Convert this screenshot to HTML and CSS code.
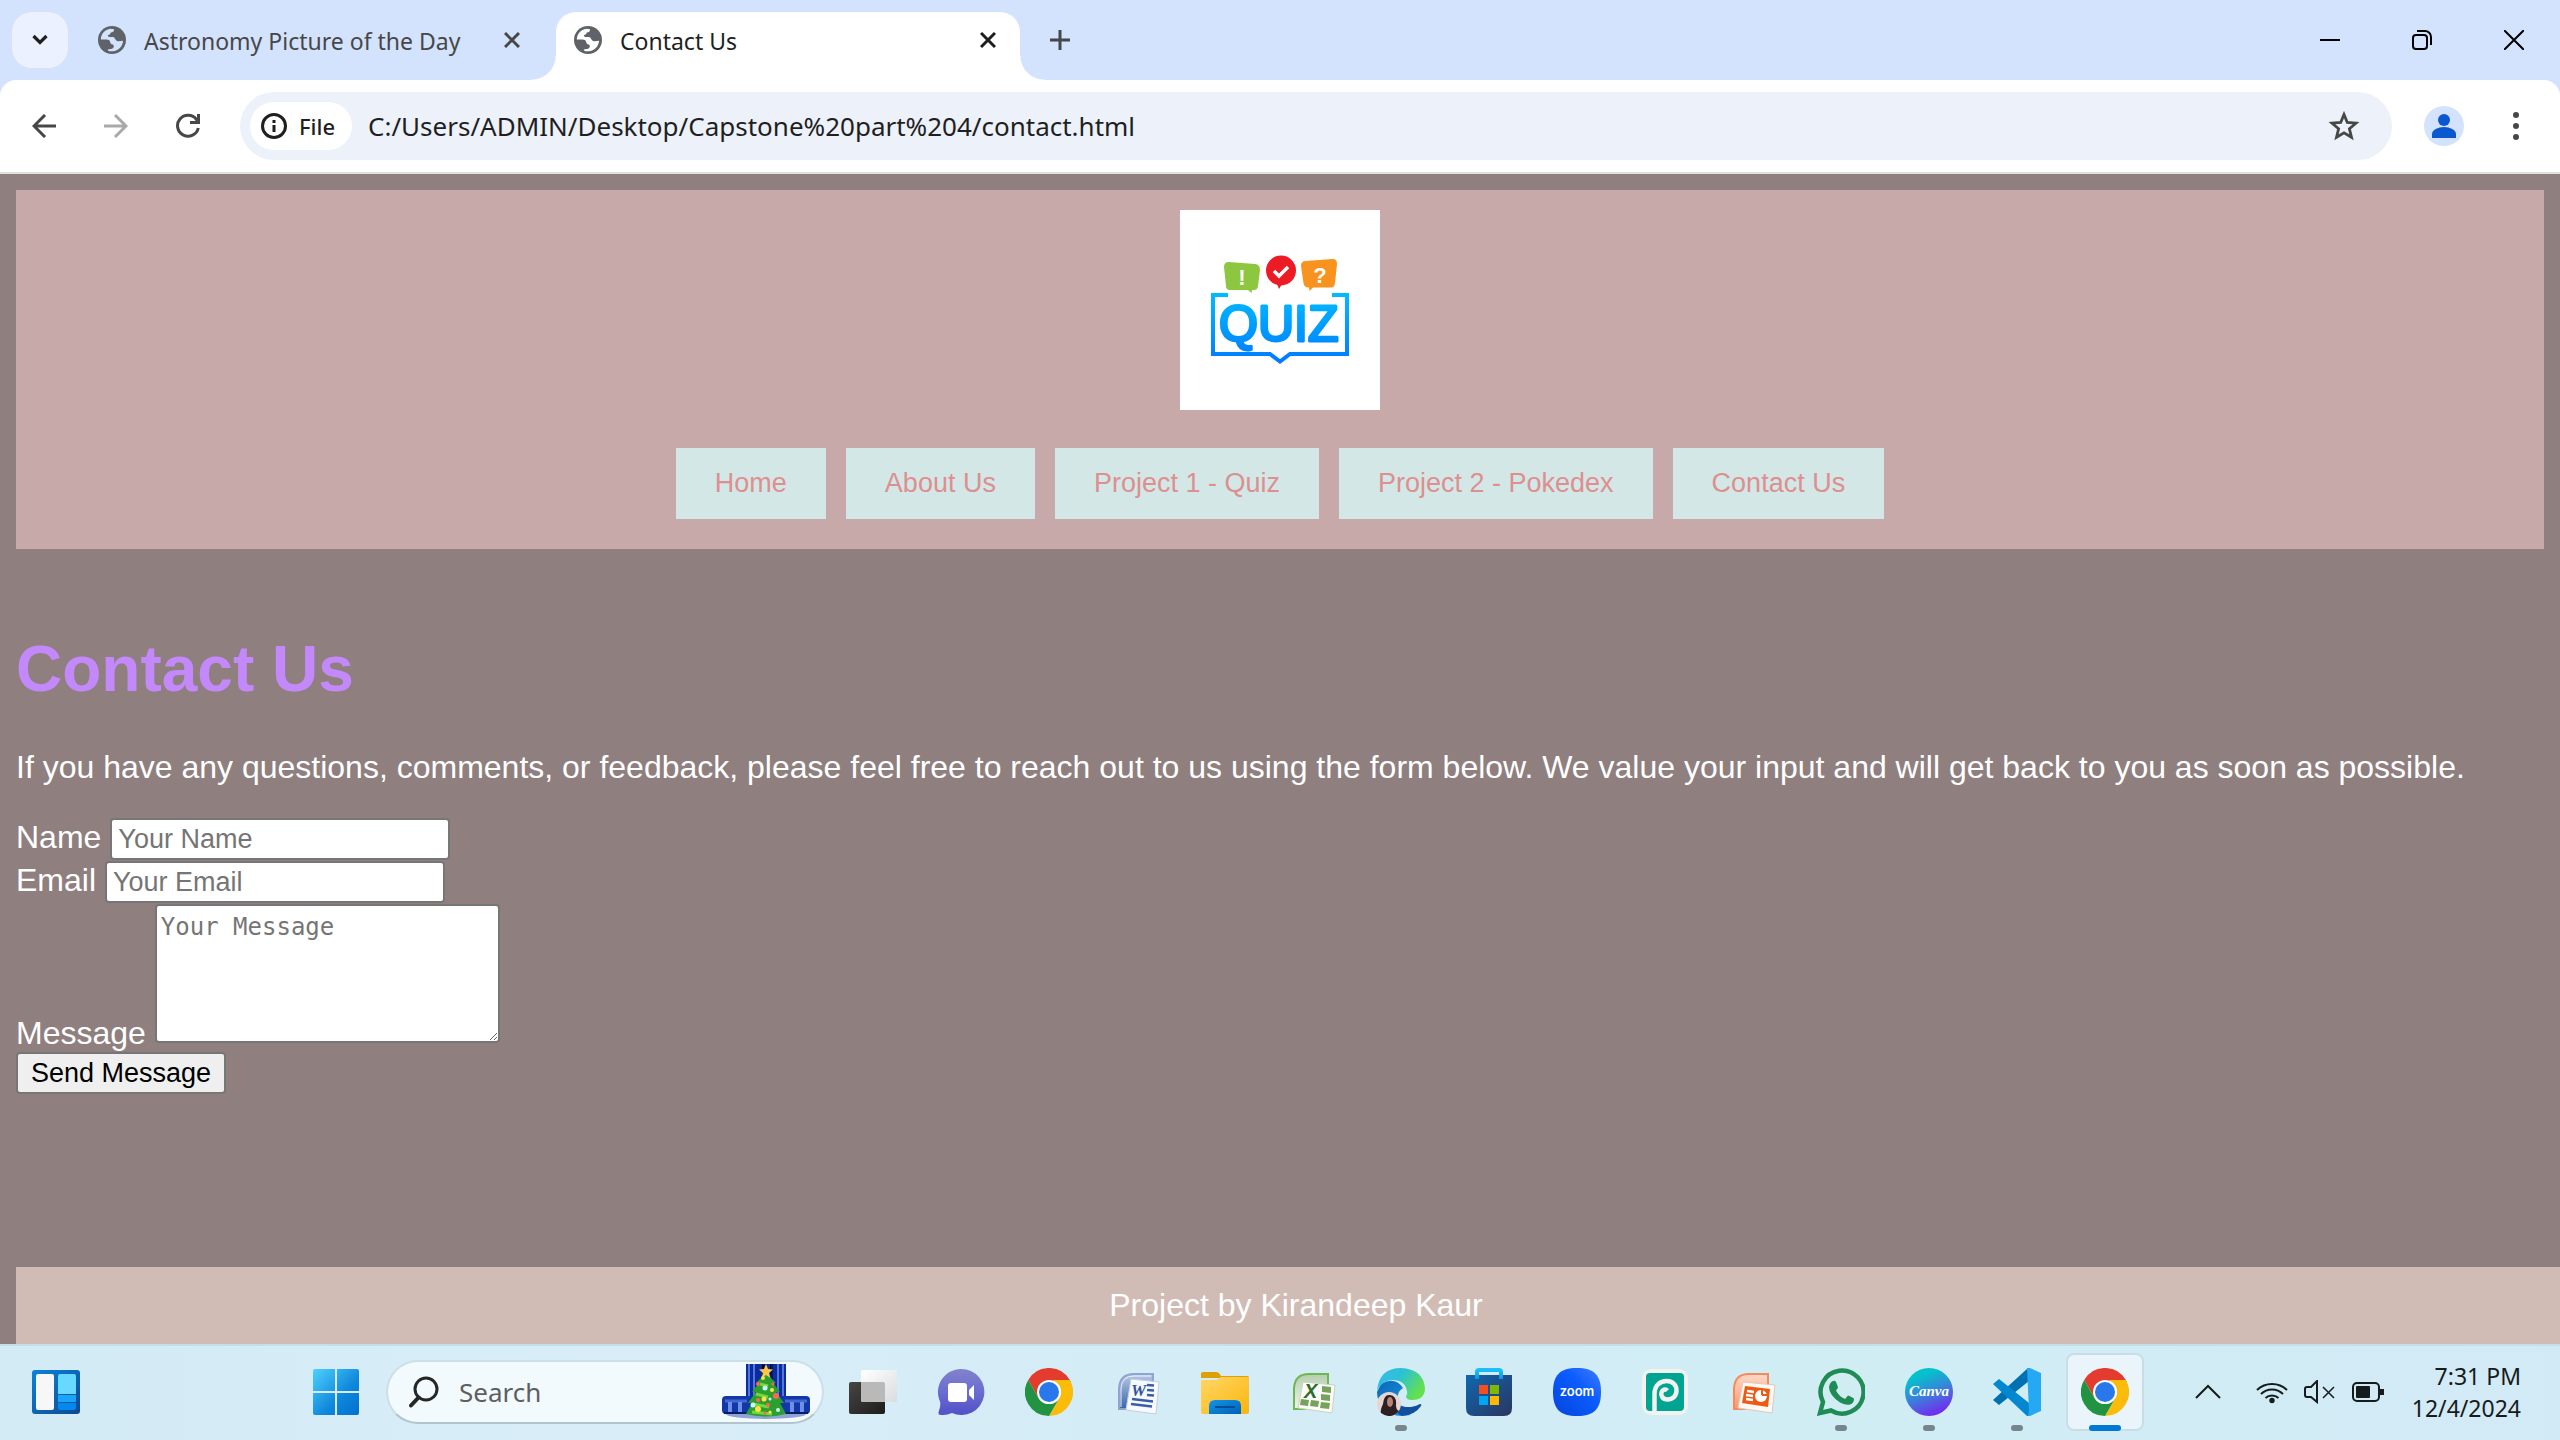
FILE: index.html
```html
<!DOCTYPE html>
<html lang="en">
<head>
<meta charset="utf-8">
<title>Contact Us</title>
<link rel="stylesheet" href="styles.css">
</head>
<body>
<svg class="defs" width="0" height="0" aria-hidden="true">
  <defs>
    <linearGradient id="quizBlue" gradientUnits="userSpaceOnUse" x1="0" y1="83" x2="0" y2="154"><stop offset="0" stop-color="#00bcff"/><stop offset="1" stop-color="#0079ff"/></linearGradient>
    <linearGradient id="winBlue" gradientUnits="userSpaceOnUse" x1="0" y1="0" x2="46" y2="46"><stop offset="0" stop-color="#4fd2ff"/><stop offset=".6" stop-color="#0f87db"/><stop offset="1" stop-color="#0070d0"/></linearGradient>
    <linearGradient id="widgetBlue" x1="0" y1="0" x2="1" y2="1"><stop offset="0" stop-color="#0a84dc"/><stop offset="1" stop-color="#10478f"/></linearGradient>
    <linearGradient id="darkPane" x1="0" y1="0" x2="1" y2="1"><stop offset="0" stop-color="#484644"/><stop offset="1" stop-color="#1d1c1b"/></linearGradient>
    <linearGradient id="lightPane" x1="0" y1="0" x2="1" y2="1"><stop offset="0" stop-color="#fff"/><stop offset="1" stop-color="#d9dcde"/></linearGradient>
    <linearGradient id="chatFill" x1="0" y1="0" x2="0" y2="1"><stop offset="0" stop-color="#8282cc"/><stop offset=".5" stop-color="#6a6cd0"/><stop offset="1" stop-color="#5250c8"/></linearGradient>
    <linearGradient id="folderFill" x1="0" y1="0" x2="1" y2="1"><stop offset="0" stop-color="#ffd766"/><stop offset="1" stop-color="#fbb50c"/></linearGradient>
    <linearGradient id="folderBlue" x1="0" y1="0" x2="1" y2="1"><stop offset="0" stop-color="#1296e6"/><stop offset="1" stop-color="#005fb8"/></linearGradient>
    <linearGradient id="officeBlue" x1="0" y1="0" x2="0" y2="1"><stop offset="0" stop-color="#b9c9e6"/><stop offset="1" stop-color="#3765ac"/></linearGradient>
    <linearGradient id="officeGreen" x1="0" y1="0" x2="0" y2="1"><stop offset="0" stop-color="#b5cfae"/><stop offset="1" stop-color="#eef5ea"/></linearGradient>
    <linearGradient id="officeOrange" x1="0" y1="0" x2="0" y2="1"><stop offset="0" stop-color="#ffd9c8"/><stop offset="1" stop-color="#ff9566"/></linearGradient>
    <linearGradient id="edgeTop" x1="0" y1="0" x2="1" y2=".5"><stop offset="0" stop-color="#38b8f2"/><stop offset=".5" stop-color="#2bc3d2"/><stop offset="1" stop-color="#63e04e"/></linearGradient>
    <linearGradient id="edgeBody" x1="0" y1="0" x2="1" y2="1"><stop offset="0" stop-color="#0c67b8"/><stop offset="1" stop-color="#1a9ae6"/></linearGradient>
    <linearGradient id="storeBag" x1="0" y1="0" x2="1" y2="1"><stop offset="0" stop-color="#0e68b0"/><stop offset="1" stop-color="#2b3560"/></linearGradient>
    <linearGradient id="storeHandle" x1="0" y1="0" x2="0" y2="1"><stop offset="0" stop-color="#1ac0fa"/><stop offset="1" stop-color="#0d94e4"/></linearGradient>
    <linearGradient id="zoomFill" x1="1" y1="0" x2="0" y2="1"><stop offset="0" stop-color="#3f7dff"/><stop offset=".4" stop-color="#0b5cff"/><stop offset="1" stop-color="#0545da"/></linearGradient>
    <linearGradient id="canvaFill" x1=".3" y1="0" x2=".7" y2="1"><stop offset=".15" stop-color="#06c0cc"/><stop offset=".55" stop-color="#3d7ddb"/><stop offset="1" stop-color="#7a1ff2"/></linearGradient>
  </defs>
  <symbol id="globe" viewBox="0 0 20 20"><circle cx="10" cy="10" r="10" fill="#5f6368"/><path fill="currentColor" d="M2 9.700C2.100 5.500 5 2.500 8.800 2l2.700.300c-.100 1.500-.600 2-1.700 2.100-1.300.100-.700 1.600-1.900 1.800-1 .200-1.200 1.100-.200 1.500.900.400 1.900.100 2.900.100 1.700 0 1.800 2.600 3.200 3 1.300.400 2.800-.300 4.100-.300-.300 3.900-3.300 7.300-7.500 7.500H8.500C7.900 18 7 17.500 7 16.700c1.600-.200 3.700-.100 4.200-1.700.300-1.200-.200-1.800-1.400-2-1.100-.200-.9-2.600-2.200-3C5.900 9.500 3.700 9.800 2 9.700z"/></symbol>
  <symbol id="cross" viewBox="0 0 16 16"><path d="M1 1l14 14M15 1L1 15" fill="none" stroke="currentColor" stroke-width="3"/></symbol>
  <symbol id="chrome" viewBox="0 0 48 48"><path fill="#e33b2e" d="M3.200 12A24 24 0 0 1 44.800 12L46 14 24 13 13.600 30z"/><path fill="#fbbc09" d="M44.800 12A24 24 0 0 1 24 48L34.400 30A12 12 0 0 0 24 12z"/><path fill="#229342" d="M24 48A24 24 0 0 1 3.200 12L13.600 30A12 12 0 0 0 34.400 30z"/><circle cx="24" cy="24" r="12" fill="#fff"/><circle cx="24" cy="24" r="10" fill="#2878ec"/></symbol>
</svg>

<div class="tabstrip">
  <button class="tab-search" aria-label="Search tabs"><svg width="16" height="12" viewBox="0 0 16 12"><path d="M1.500 2L8 8.500 14.500 2" fill="none" stroke="#1f1f1f" stroke-width="3.200"/></svg></button>
  <div class="tab">
    <svg class="globe" width="28" height="28"><use href="#globe"/></svg>
    <span class="tab-title">Astronomy Picture of the Day</span>
    <button class="tab-close" aria-label="Close tab"><svg width="16" height="16"><use href="#cross"/></svg></button>
  </div>
  <div class="tab active">
    <svg class="globe" width="28" height="28"><use href="#globe"/></svg>
    <span class="tab-title">Contact Us</span>
    <button class="tab-close" aria-label="Close tab"><svg width="16" height="16"><use href="#cross"/></svg></button>
  </div>
  <button class="new-tab" aria-label="New tab"><svg width="20" height="20" viewBox="0 0 20 20"><path d="M10 0v20M0 10h20" stroke="#474747" stroke-width="3"/></svg></button>
  <div class="window-buttons">
    <button aria-label="Minimize"><svg width="20" height="20"><path d="M0 10h20" stroke="#000" stroke-width="2"/></svg></button>
    <button aria-label="Restore"><svg width="20" height="20" fill="none" stroke="#000" stroke-width="2"><rect x="1" y="5" width="14" height="14" rx="3"/><path d="M5 1h8a6 6 0 0 1 6 6v8"/></svg></button>
    <button aria-label="Close"><svg width="20" height="20"><path d="M0 0l20 20M20 0L0 20" stroke="#000" stroke-width="2"/></svg></button>
  </div>
</div>

<div class="toolbar">
  <div class="nav-buttons">
    <button aria-label="Back"><svg width="24" height="24" fill="none" stroke="#474747" stroke-width="3"><path d="M24 12H2M13 1L2 12l11 11"/></svg></button>
    <button aria-label="Forward"><svg width="24" height="24" fill="none" stroke="#a9a9a9" stroke-width="3"><path d="M0 12h22M11 1l11 11-11 11"/></svg></button>
    <button aria-label="Reload"><svg width="26" height="26" viewBox="-1 -1 26 26" fill="none" stroke="#474747" stroke-width="3"><path d="M22.300 14A10.500 10.500 0 1 1 20.500 5.500L22.500 8"/><path d="M22.500 0v8.500H14"/></svg></button>
  </div>
  <div class="omnibox">
    <button class="chip"><svg width="26" height="26" fill="none" stroke="#1f1f1f" stroke-width="3"><circle cx="13" cy="13" r="11.500"/><path d="M13 12v7M13 7v3"/></svg>File</button>
    <input class="url" aria-label="Address" value="C:/Users/ADMIN/Desktop/Capstone%20part%204/contact.html">
    <button class="star" aria-label="Bookmark"><svg width="32" height="30" viewBox="0 0 32 30"><path d="M16 3.500l3.300 8 8.700.700-6.600 5.600 2.100 8.500L16 21.800l-7.500 4.500 2.100-8.500L4 12.200l8.700-.700z" fill="none" stroke="#474747" stroke-width="2.800"/></svg></button>
  </div>
  <button class="profile" aria-label="Profile"><svg width="40" height="40"><circle cx="20" cy="20" r="20" fill="#d3e3fd"/><circle cx="20" cy="14" r="6" fill="#0b57d0"/><path d="M8 32v-4c0-4 6-7 12-7s12 3 12 7v4z" fill="#0b57d0"/></svg></button>
  <button class="menu" aria-label="Menu"><svg width="8" height="30" fill="#474747"><circle cx="4" cy="4" r="3"/><circle cx="4" cy="15" r="3"/><circle cx="4" cy="26" r="3"/></svg></button>
</div>

<div class="page">
  <header class="site-header">
    <svg class="logo" width="200" height="200" viewBox="0 0 200 200" role="img" aria-label="Quiz">
      <rect width="200" height="200" fill="#fff"/>
      <path d="M49 52l26 2q5 .500 5 6l-2 16q-.500 4-4 4h-2l-.500 3-3.500-3H50q-4 0-4-4l-2-19q0-5 5-5z" fill="#8dc63f"/>
      <circle cx="101" cy="60.500" r="15" fill="#ed1c24"/><path d="M97 74h5l-3 5z" fill="#ed1c24"/>
      <path d="M94 61l5 5 9-9" fill="none" stroke="#fff" stroke-width="3.500"/>
      <path d="M126 51l26-2q5-.500 5 5l-2 19q-.500 4.500-4 4.500h-18l-3.500 3.500-.500-3.500q-5 0-5.500-4.500l-2.500-17q0-5 5-5z" fill="#f7931e"/>
      <text x="62" y="75" class="bubble">!</text>
      <text x="140" y="73" class="bubble">?</text>
      <path d="M48 85H33v59h57l10 7.500 10-7.500h57V85h-15" fill="none" stroke="url(#quizBlue)" stroke-width="4"/>
      <text x="39" y="131" class="quiz">QUIZ</text>
    </svg>
    <nav class="site-nav">
      <a href="#home">Home</a>
      <a href="#about">About Us</a>
      <a href="#quiz">Project 1 - Quiz</a>
      <a href="#pokedex">Project 2 - Pokedex</a>
      <a href="#contact">Contact Us</a>
    </nav>
  </header>
  <main>
    <h1>Contact Us</h1>
    <p>If you have any questions, comments, or feedback, please feel free to reach out to us using the form below. We value your input and will get back to you as soon as possible.</p>
    <form>
      <div class="field"><label for="name">Name</label><input id="name" type="text" placeholder="Your Name"></div>
      <div class="field"><label for="email">Email</label><input id="email" type="email" placeholder="Your Email"></div>
      <div class="field area"><label for="message">Message</label><textarea id="message" placeholder="Your Message"></textarea></div>
      <button class="send" type="button">Send Message</button>
    </form>
  </main>
  <footer class="site-footer">Project by Kirandeep Kaur</footer>
</div>

<div class="taskbar">
  <button class="widgets" aria-label="Widgets"><svg width="48" height="44"><rect width="48" height="44" rx="3" fill="url(#widgetBlue)"/><rect x="4" y="4" width="18" height="36" rx="2" fill="#f7f7f7"/><path d="M26 6a2 2 0 0 1 2-2h14a2 2 0 0 1 2 2v18H26z" fill="#67d9ff"/><path d="M26 25h18v7H26z" fill="#1aa5fb"/><path d="M26 33h18v5a2 2 0 0 1-2 2H28a2 2 0 0 1-2-2z" fill="#0487ee"/></svg></button>
  <button class="start" aria-label="Start"><svg width="46" height="46" fill="url(#winBlue)"><path d="M2 0h20v22H0V2a2 2 0 0 1 2-2zM24 0h20a2 2 0 0 1 2 2v20H24zM0 24h22v22H2a2 2 0 0 1-2-2zM24 24h22v20a2 2 0 0 1-2 2H24z"/></svg></button>
  <div class="search">
    <svg width="30" height="32" viewBox="0 0 30 32" fill="none" stroke="#262626" stroke-width="3"><circle cx="17" cy="13" r="11"/><path d="M9.500 21.500L2 29.500" stroke-width="4" stroke-linecap="round"/></svg>
    <input type="text" aria-label="Search" placeholder="Search">
    <svg class="tree" width="88" height="56" viewBox="0 0 88 56">
      <ellipse cx="44" cy="50" rx="40" ry="5" fill="#8fa3d6"/>
      <path d="M24 0h40v44H24z" fill="#0a2c9c"/><path d="M27 0v44M32 0v44M56 0v44M61 0v44" stroke="#5375de" stroke-width="2"/><path d="M40 0h3v44M48 0h2v44" stroke="#04196b" stroke-width="2"/>
      <rect x="0" y="32" width="88" height="18" rx="4" fill="#1238a8"/><path d="M3 37h22M63 37h22" stroke="#4468d2" stroke-width="3"/><path d="M8 38v10M18 38v10M70 38v10M80 38v10" stroke="#6f90e8" stroke-width="4"/><path d="M2 49h84" stroke="#071c6b" stroke-width="2"/>
      <path d="M44 9l10 10h-3l7 9h-4l8 11h-4l6 11q-20 5-40 0l6-11h-4l8-11h-4l7-9h-3z" fill="#2ca02f"/>
      <path d="M38 20l8 2M34 30l12 3M31 40l16 3M30 48l20 2" stroke="#76d63c" stroke-width="3"/>
      <path d="M44 0l2 5 5 .500-4 3.500 1.500 5-4.500-3-4.500 3 1.500-5-4-3.500 5-.500z" fill="#ffc64a"/>
      <g fill="#ff6655"><circle cx="36" cy="20" r="2"/><circle cx="51" cy="20" r="1.500"/><circle cx="54" cy="32" r="3"/><circle cx="36" cy="36" r="2"/><circle cx="46" cy="41" r="2"/><circle cx="43" cy="49" r="1.500"/></g>
      <g fill="#ffe14d"><circle cx="41" cy="14" r="2"/><circle cx="50" cy="26" r="2"/><circle cx="42" cy="35" r="2.500"/><circle cx="36" cy="45" r="3"/><circle cx="48" cy="48" r="1.500"/></g>
      <g fill="#c8f5ff"><circle cx="43" cy="24" r="2.500"/><circle cx="48" cy="35" r="1.500"/><circle cx="31" cy="41" r="2.500"/><circle cx="56" cy="46" r="2"/></g>
    </svg>
  </div>
  <div class="apps">
    <button aria-label="Task View"><svg width="48" height="48"><rect y="14" width="36" height="32" rx="2" fill="url(#darkPane)"/><rect x="12" y="2" width="36" height="32" rx="2" fill="url(#lightPane)"/><path d="M12 14h22a2 2 0 0 1 2 2v18H14a2 2 0 0 1-2-2z" fill="#b9b9b9"/></svg></button>
    <button aria-label="Chat"><svg width="48" height="48"><path d="M24 1a23 23 0 1 1-9 44Q8 48 2 46.500q-1-1 0-4 2-5 1-9A23 23 0 0 1 24 1z" fill="url(#chatFill)"/><rect x="11" y="15" width="19" height="19" rx="3" fill="#fff"/><path d="M32 22l5-5v15l-5-5z" fill="#fff"/></svg></button>
    <button aria-label="Chrome"><svg width="48" height="48"><use href="#chrome"/></svg></button>
    <button aria-label="Word"><svg width="48" height="48" viewBox="-1 0 48 48"><path d="M5 41V20Q6 6 20 6h19v35z" fill="url(#officeBlue)" stroke="#8fa5d0" stroke-width="2"/><path d="M7 39V20Q8 8 20 8h17" fill="none" stroke="#eef3fb"/><path d="M17 11l28 3-3 32-30-4z" fill="#f7fafd" stroke="#c4cfdf"/><text x="17" y="28" class="word">W</text><path d="M33 17l7 .600M33 22l7 .600M33 27l7 .600M18 31l21 2.500M17 36l21 2.500" stroke="#3a5da8" stroke-width="2.500"/></svg></button>
    <button aria-label="File Explorer"><svg width="48" height="48"><path d="M0 6a2 2 0 0 1 2-2h13q3 0 5 4h26q2 0 2 2H0z" fill="#dfa006"/><path d="M0 12h15q3 0 5-3h26q2 0 2 2v33q0 2-2 2H2q-2 0-2-2z" fill="url(#folderFill)"/><path d="M8 46V38q0-6 6-6h20q6 0 6 6v8z" fill="url(#folderBlue)"/><path d="M14 39h20" stroke="#064f92" stroke-width="2"/></svg></button>
    <button aria-label="Excel"><svg width="48" height="48" viewBox="-2 0 48 48"><path d="M3 41V20Q4 6 18 6h19v35z" fill="url(#officeGreen)" stroke="#6fb753" stroke-width="2"/><path d="M12 14l32 3-3 28-34-5z" fill="#fbfcf7" stroke="#c9d4bf"/><text x="13" y="30" class="excel">X</text><path d="M31 18l9 1v6l-9-1zM30 26l9 1v6l-9-1zM10 31l8 1-1 6-8-1zM20 32l8 1-1 6-8-1zM30 34l9 1-1 6-9-1z" fill="#76a25c"/></svg></button>
    <button class="open" aria-label="Edge"><svg width="48" height="48"><path d="M0 24A24 24 0 0 0 24 48q10-1 10-1Q20 42 21 28q0-5 5-8Q18 8 4 16z" fill="url(#edgeBody)"/><path d="M0 23Q2 0 24 0 46 1 48 20q0 12-13 12-6 0-6-4 2-2 1-5-2-11-15-11Q4 13 0 23z" fill="url(#edgeTop)"/><path d="M17 27q1 13 17 12 6-1 9-3 2 0 1 2-6 9-19 10Q12 42 17 27z" fill="#0f4f9c"/><circle cx="12" cy="36" r="12" fill="#e5d5d3"/><path d="M4 45q-1-3 2-9 1-10 7-9 7 1 6 10 0 5 3 6-8 9-18 2z" fill="#2c2023"/><ellipse cx="13" cy="34" rx="3" ry="5" fill="#b98478"/></svg></button>
    <button aria-label="Microsoft Store"><svg width="48" height="48"><path d="M1 7h46v33q0 8-8 8H9q-8 0-8-8z" fill="url(#storeBag)"/><path d="M12 11V4q0-2 2-2h20q2 0 2 2v7" fill="none" stroke="url(#storeHandle)" stroke-width="4"/><path d="M14 17h9v9h-9z" fill="#f25022"/><path d="M25 17h9v9h-9z" fill="#7fba00"/><path d="M14 28h9v9h-9z" fill="#00a4ef"/><path d="M25 28h9v9h-9z" fill="#ffb900"/></svg></button>
    <button aria-label="Zoom"><svg width="48" height="48"><path d="M24 0C41 0 48 7 48 24S41 48 24 48 0 41 0 24 7 0 24 0z" fill="url(#zoomFill)"/><text x="24" y="28" class="zoom">zoom</text></svg></button>
    <button aria-label="Photopea"><svg width="48" height="48"><rect x="1" y="1" width="46" height="46" rx="9" fill="#f2f2f0"/><rect x="5" y="5" width="38" height="38" rx="4" fill="#00a592"/><path d="M13.500 43V26c0-9 6-13 12-13 6 0 10 4 10 9.500s-4 9-9 9-7-4-6-7 4-4 6-2" fill="none" stroke="#f2f2f0" stroke-width="4.500"/></svg></button>
    <button aria-label="PowerPoint"><svg width="48" height="48" viewBox="-2 0 48 48"><path d="M3 41V20Q4 6 18 6h19v35z" fill="url(#officeOrange)" stroke="#f58a60" stroke-width="2"/><path d="M12 14l32 3-3 28-34-5z" fill="#fdf8f4" stroke="#dccabd"/><path d="M14 18l25 3-2 18-26-4z" fill="#ec5b13"/><path d="M16 23l7 1M15 27l7 1M15 31l7 1" stroke="#fff" stroke-width="2.500"/><circle cx="30" cy="28" r="6" fill="#fff"/><path d="M31 27v-6M31 27h6" stroke="#ec5b13" stroke-width="2"/></svg></button>
    <button class="open" aria-label="WhatsApp"><svg width="48" height="48"><path d="M3 45l3-11A21.500 21.500 0 1 1 14 42.500z" fill="none" stroke="#1f8b55" stroke-width="4.500"/><path d="M16 13q2-1 3 1l2 5q0 1-2 3.500 3 6 9 8.500l3-3.500q1 0 6 3 0 5-4 6-4 1-10-2Q12 27 12 19q1-5 4-6z" fill="#1f8b55"/></svg></button>
    <button class="open" aria-label="Canva"><svg width="48" height="48"><circle cx="24" cy="24" r="24" fill="url(#canvaFill)"/><text x="24" y="28" class="canva">Canva</text></svg></button>
    <button class="open" aria-label="Visual Studio Code"><svg width="48" height="48"><path d="M0 32l35-32 1 13L6 37z" fill="#0070b3"/><path d="M0 16l6-5 30 24v13h-2z" fill="#0288d1"/><path d="M34 0h3l11 5v38l-11 5h-2l1-5z" fill="#25a9f2"/></svg></button>
    <button class="open current" aria-label="Chrome"><svg width="48" height="48"><use href="#chrome"/></svg></button>
  </div>
  <div class="tray">
    <button class="more" aria-label="Show hidden icons"><svg width="26" height="16" fill="none" stroke="#161b1d" stroke-width="2"><path d="M1 14L13 2l12 12"/></svg></button>
    <button class="status" aria-label="Network, volume, battery">
      <svg width="32" height="24" fill="none" stroke="#161b1d" stroke-width="2"><path d="M1 10a21.500 21.500 0 0 1 30 0M5 14a15.500 15.500 0 0 1 22 0M9.500 18a9.500 9.500 0 0 1 13 0"/><circle cx="16" cy="20.500" r="2.700" fill="#161b1d" stroke="none"/></svg>
      <svg width="32" height="24" fill="none" stroke="#161b1d" stroke-width="2"><path d="M13 1v21l-6-5H3q-2 0-2-2V9q0-2 2-2h4z"/><path d="M19 7l11 11M30 7L19 18" stroke-width="1.500"/></svg>
      <svg width="32" height="24" fill="none" stroke="#161b1d" stroke-width="2"><rect x="1" y="3" width="26" height="18" rx="4"/><rect x="4" y="6" width="14" height="12" rx="1" fill="#161b1d" stroke="none"/><path d="M28 9h4v6h-4z" fill="#161b1d" stroke="none"/></svg>
    </button>
    <div class="clock"><time>7:31 PM</time><time>12/4/2024</time></div>
  </div>
</div>
</body>
</html>
```

FILE: styles.css
```css
* { box-sizing: border-box; }
body {
  margin: 0;
  min-height: 100vh;
  display: flex;
  flex-direction: column;
  overflow-x: hidden;
  font-family: "Noto Sans", sans-serif;
  font-size: 23px;
  color: #1f1f1f;
}
.defs { position: absolute; }
button { margin: 0; padding: 0; border: 0; background: none; font: inherit; color: inherit; }
svg { display: block; flex: none; }

/* Tab strip */
.tabstrip { display: flex; align-items: flex-start; height: 80px; padding: 12px 0 0 12px; background: #d3e2fd; }
.tab-search { width: 56px; height: 56px; display: grid; place-items: center; border-radius: 20px; background: #ebf1fe; }
.tab { display: flex; align-items: center; width: 464px; height: 56px; margin-left: 12px; padding: 0 16px 0 18px; color: #474747; }
.tab .globe { color: #d3e2fd; }
.tab-title { flex: 1; padding: 2px 0 0 18px; line-height: 32px; white-space: nowrap; }
.tab-close { width: 32px; height: 32px; display: grid; place-items: center; }
.tab.active { position: relative; height: 68px; margin-left: 12px; padding: 0 16px 12px 18px; border-radius: 20px 20px 0 0; background: #fff; color: #1f1f1f; }
.tab.active .globe { color: #fff; }
.tab.active::before, .tab.active::after { content: ""; position: absolute; bottom: 0; width: 24px; height: 24px; }
.tab.active::before { right: 100%; background: radial-gradient(circle at 0 0, transparent 23px, #fff 24px); }
.tab.active::after { left: 100%; background: radial-gradient(circle at 100% 0, transparent 23px, #fff 24px); }
.new-tab { width: 56px; height: 56px; margin-left: 12px; display: grid; place-items: center; }
.window-buttons { display: flex; margin-left: auto; }
.window-buttons button { width: 92px; height: 56px; display: grid; place-items: center; }

/* Toolbar */
.toolbar { display: flex; align-items: center; height: 94px; padding: 0 16px 0 8px; border-bottom: 2px solid #dfe3df; border-radius: 16px 16px 0 0; background: #fff; box-shadow: 0 -16px 0 0 #d3e2fd; }
.tabstrip { position: relative; z-index: 1; }
.nav-buttons { display: flex; }
.nav-buttons button { width: 72px; height: 56px; display: grid; place-items: center; }
.omnibox { flex: 1; display: flex; align-items: center; height: 68px; margin-left: 16px; padding: 0 32px 0 10px; border-radius: 34px; background: #ecf1fa; }
.chip { display: flex; align-items: center; gap: 12px; width: 102px; height: 48px; padding-left: 11px; border-radius: 24px; background: #fff; font-size: 22px; font-weight: 500; }
.url { flex: 1; margin-left: 16px; padding: 0; border: 0; background: none; color: #1f1f1f; font: 26px/40px "Noto Sans", sans-serif; outline: 0; }
.profile { margin-left: 32px; }
.menu { width: 56px; margin-left: 24px; display: grid; place-items: center; }

/* Web page */
.page { flex: 1; display: flex; flex-direction: column; padding: 16px 16px 0; overflow: hidden; background: #8f807f; color: #fff; font: 32px/36px "Liberation Sans", Arial, sans-serif; }
.site-header { display: flex; flex-direction: column; align-items: center; gap: 38px; padding: 20px 20px 30px; background: #c8a9a9; }
.site-nav { display: flex; justify-content: center; gap: 20px; }
.site-nav a { padding: 20px 39px; background: #d3e7e7; color: #de8f8f; font-size: 27px; line-height: 31px; text-decoration: none; }
.bubble { font: 700 22px "Liberation Sans", sans-serif; fill: #fff; text-anchor: middle; }
.quiz { font: 50px "Liberation Sans", sans-serif; fill: url(#quizBlue); stroke: url(#quizBlue); stroke-width: 3px; stroke-linejoin: round; }
h1 { margin: 83px 0 43px; color: #c388f9; font-size: 64px; line-height: 74px; }
p { margin: 0 0 33px; }
form { display: flex; flex-direction: column; align-items: flex-start; }
.field { display: flex; align-items: baseline; gap: 9px; }
.field input, .field textarea { margin: 0; border: 2px solid #767676; border-radius: 4px; background: #fff; color: #000; }
.field input { width: 340px; height: 42px; margin-bottom: 1px; padding: 0 6px; font: 27px/31px "Liberation Sans", Arial, sans-serif; }
.field.area { align-items: flex-end; }
.field textarea { width: 345px; height: 139px; margin-bottom: 8px; padding: 6px 4px; font: 24px/30px "DejaVu Sans Mono", monospace; }
.field ::placeholder { color: #757575; }
.send { height: 42px; margin-top: 1px; padding: 0 13px; border: 2px solid #767676; border-radius: 4px; background: #efefef; color: #000; font: 27px/31px "Liberation Sans", Arial, sans-serif; }
.site-footer { width: 100vw; margin-top: auto; padding: 20px; background: #d1bcb5; line-height: 37px; text-align: center; }

/* Taskbar */
.taskbar { display: flex; align-items: center; height: 96px; padding: 0 39px 2px 32px; border-top: 2px solid #c3dfe8; background: linear-gradient(90deg, #d3ebf5, #d8edf7 25%, #d3ecf6 50%, #d0edf4 72%, #d2eaf6); }
.start { margin-left: 233px; }
.search { display: flex; align-items: center; width: 438px; height: 64px; margin-left: 27px; padding: 0 12px 0 21px; border: 2px solid #cbdfe7; border-bottom-color: #b0c5cd; border-radius: 32px; background: #f3fafd; }
.search input { flex: 1; min-width: 0; margin-left: 20px; padding: 0; border: 0; background: none; font: 26px/36px "Noto Sans", sans-serif; }
.search ::placeholder { color: #5d5f61; }
.apps { display: flex; margin-left: 5px; }
.apps button { position: relative; width: 88px; height: 78px; display: grid; place-items: center; }
.open::after { content: ""; position: absolute; left: 38px; bottom: 0; width: 12px; height: 6px; border-radius: 3px; background: #76868c; }
.current::before { content: ""; position: absolute; z-index: -1; inset: 0 5px; border: 2px solid #c8dde5; border-radius: 8px; background: #eaf5fb; }
.current { z-index: 0; }
.open.current::after { left: 28px; width: 32px; background: #0078d4; }
.word { font: italic 700 17px "Liberation Serif", serif; fill: #2f559f; }
.excel { font: italic 700 20px "Liberation Sans", sans-serif; fill: #2f6b2b; }
.zoom { font: 600 13px Inter, sans-serif; fill: #fff; text-anchor: middle; }
.canva { font: italic 700 15px "Liberation Serif", serif; fill: #fff; text-anchor: middle; }
.tray { display: flex; align-items: center; margin-left: auto; color: #161b1d; }
.status { display: flex; gap: 16px; margin-left: 35px; }
.clock { width: 137px; text-align: right; }
.clock time { display: block; line-height: 32px; }
```
